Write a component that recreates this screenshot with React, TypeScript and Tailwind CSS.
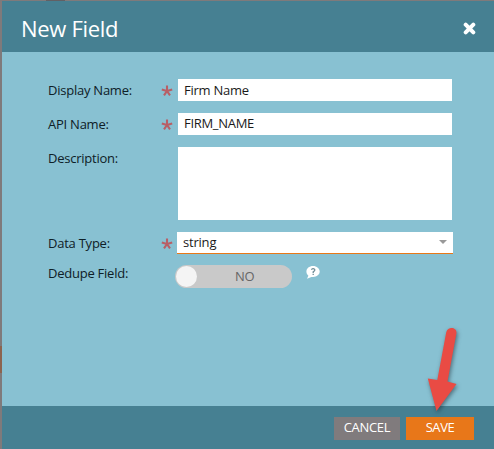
import React from "react";

function Row({
  label,
  required,
  className,
  labelClass = "pt-[2px]",
  children,
}: {
  label: string;
  required?: boolean;
  className: string;
  labelClass?: string;
  children: React.ReactNode;
}) {
  return (
    <div className={`flex items-start ${className}`}>
      <div className={`w-[114px] shrink-0 leading-[18px] tracking-[-0.24px] ${labelClass}`}>{label}</div>
      <div className="w-[16px] shrink-0 pt-[6px]">
        {required && (
          <svg width="12" height="12" viewBox="0 0 12 12" className="-ml-[1px] block" stroke="#b85f66" strokeWidth="2.1">
            <path d="M6 6V.5M6 6L.8 4.500M6 6L11.200 4.500M6 6L3 10.400M6 6L9 10.400" />
          </svg>
        )}
      </div>
      {children}
    </div>
  );
}

export default function App() {
  return (
    <div className="relative flex h-[449px] w-[494px] overflow-hidden bg-[#7f7a7b] pt-[1px] font-['Open_Sans','Noto_Sans',sans-serif] text-[13px] text-[#0e2027]">
      <div className="flex w-[2px] shrink-0 flex-col">
        <div className="mt-[345px] h-[27px] bg-[#8c644f]" />
      </div>
      <div className="flex grow flex-col">
        <header className="flex h-[51px] shrink-0 items-center justify-between bg-[#468092] px-[18px]">
          <h1 className="pl-[1px] pt-[3px] text-[22px] leading-[30px] tracking-[-0.32px] text-white">New Field</h1>
          <svg width="13" height="13" viewBox="0 0 13 13" className="mt-[4px]" stroke="white" strokeWidth="4" strokeLinecap="round">
            <path d="M2.700 2.700L10.300 10.300M10.300 2.700L2.700 10.300" />
          </svg>
        </header>

        <main className="flex grow flex-col bg-[#88c1d2] pl-[46px] pt-[27px]">
          <Row label="Display Name:" required className="h-[34px]">
            <div className="h-[22px] w-[274px] bg-white pl-[6px] leading-[23px] tracking-[-0.24px] text-[#1a1a1a]">Firm Name</div>
          </Row>
          <Row label="API Name:" required className="h-[34px]">
            <div className="h-[22px] w-[274px] bg-white pl-[6px] leading-[21px] tracking-[-0.3px] text-[#1a1a1a]">FIRM_NAME</div>
          </Row>
          <Row label="Description:" className="h-[85px]">
            <div className="h-[73px] w-[274px] bg-white" />
          </Row>
          <Row label="Data Type:" required className="h-[33px]">
            <div className="-ml-[1px] flex h-[22px] w-[276px] items-center justify-between border-b border-[#e87818] bg-white pl-[6px] pr-[6px] text-[#1a1a1a]">
              <span className="-mt-[1px] leading-[20px] tracking-[-0.2px]">string</span>
              <svg width="8" height="4" viewBox="0 0 8 4" className="-mt-[2px]">
                <path d="M0 0H8L4 4Z" fill="#999" />
              </svg>
            </div>
          </Row>
          <Row label="Dedupe Field:" className="h-[23px]" labelClass="-mt-[1px]">
            <div className="-ml-[3px] flex h-[23px] w-[117px] items-center rounded-full bg-[#c9c9c9] pl-[1px]">
              <div className="h-[21px] w-[21px] rounded-full bg-[#f4f4f4]" />
              <span className="pl-[38px] tracking-[-0.2px] text-[#666]">NO</span>
            </div>
            <svg width="14" height="13" viewBox="0 0 14 13" className="ml-[14px] mt-[1px]">
              <path d="M7 0C3.200 0 .4 2.400 .4 5.600c0 1.800.8 3.200 2 4.100L1 12.700l4.400-1.800c.5.1 1 .1 1.600.1 3.800 0 6.700-2.300 6.700-5.400S10.800 0 7 0Z" fill="white" />
              <path d="M5.300 3.600Q7 2 8.500 3.200Q9.500 4.500 7.200 5.900V6.900M7.200 7.700V9" fill="none" stroke="#718e98" strokeWidth="1.3" />
            </svg>
          </Row>
        </main>

        <footer className="flex h-[43px] shrink-0 justify-end gap-[6px] bg-[#468092] pr-[20px] pt-[11px] leading-[21px] text-white">
          <button className="h-[23px] w-[66px] bg-[#807b7d] pb-[2px] tracking-[-0.3px]">CANCEL</button>
          <button className="h-[23px] w-[68px] bg-[#e87719] pb-[2px] tracking-[-0.4px]">SAVE</button>
        </footer>
      </div>

      <svg className="absolute left-[420px] top-[320px] drop-shadow-[1px_2px_2px_rgba(30,40,50,0.55)]" width="50" height="100" viewBox="420 320 50 100">
        <path d="M446.300 332C447.600 326.200 457.300 326.500 456.400 333.500L447.500 381.500L456.500 384L436.500 411L427.800 378.500L437.300 380Z" fill="#e94b44" />
      </svg>
      <div className="absolute left-[46px] top-0 h-px w-[19px] bg-[#626064]" />
    </div>
  );
}
